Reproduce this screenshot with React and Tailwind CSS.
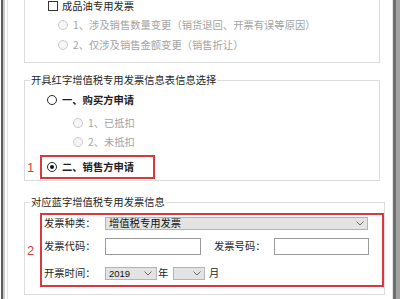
import React from 'react'

function Radio({ checked, disabled }) {
  return (
    <span className={`w-[10px] h-[10px] rounded-full border flex items-center justify-center shrink-0 ${disabled ? 'border-[#c9c9c9] bg-[#f6f6f6]' : 'border-[#2a2a2a] bg-white'}`}>
      {checked && <span className="w-[4px] h-[4px] rounded-full bg-[#111]" />}
    </span>
  )
}

function Chevron() {
  return (
    <svg width="8" height="5" viewBox="0 0 8 5" className="shrink-0">
      <polyline points="0.5,0.5 4,4 7.5,0.5" fill="none" stroke="#6a6a6a" strokeWidth="1" />
    </svg>
  )
}

export default function App() {
  return (
    <div className="w-[400px] h-[299px] bg-white flex overflow-hidden text-[10.3px] leading-none text-[#1e1e1e] font-['Noto_Sans_CJK_SC','Noto_Sans',sans-serif]">
      {/* window left frame */}
      <div className="w-[1px] bg-white" />
      <div className="w-[2px] bg-[#5c5c5c]" />
      <div className="w-[2px] bg-[#cacaca]" />
      <div className="w-[2px] bg-white" />
      <div className="w-[1px] bg-[#e4e4e4]" />

      <div className="w-[384px] pl-[16px] flex flex-col">
        {/* group 1 (top cut off) */}
        <div className="w-[356px] h-[63px] border-x border-b border-[#dcdcdc] flex flex-col">
          <div className="h-[12px] pl-[23px] flex items-center gap-[4px]">
            <span className="w-[10px] h-[10px] border border-[#333] bg-white shrink-0" />
            <span>成品油专用发票</span>
          </div>
          <div className="mt-[3px] h-[20px] pl-[33px] flex items-center gap-[5px] text-[#a3a3a3]">
            <Radio disabled />
            <span>1、涉及销售数量变更（销货退回、开票有误等原因）</span>
          </div>
          <div className="h-[20px] pl-[33px] flex items-center gap-[5px] text-[#a3a3a3]">
            <Radio disabled />
            <span>2、仅涉及销售金额变更（销售折让）</span>
          </div>
        </div>

        {/* group 2 */}
        <fieldset className="mt-[10px] w-[356px] border border-[#dcdcdc] pb-[1px]">
          <legend className="ml-[5px] px-[1px] leading-[14px]">开具红字增值税专用发票信息表信息选择</legend>
          <div className="mt-[5px] h-[16px] pl-[22px] flex items-center gap-[5px] font-bold">
            <Radio />
            <span>一、购买方申请</span>
          </div>
          <div className="mt-[7px] h-[16px] pl-[48px] flex items-center gap-[5px] text-[#a3a3a3]">
            <Radio disabled />
            <span>1、已抵扣</span>
          </div>
          <div className="mt-[3px] h-[16px] pl-[48px] flex items-center gap-[5px] text-[#a3a3a3]">
            <Radio disabled />
            <span>2、未抵扣</span>
          </div>
          <div className="mt-[5px] flex items-center">
            <span className="w-[15px] pl-[2px] text-[13px] text-[#d24545] font-['Liberation_Sans',sans-serif]">1</span>
            <div className="w-[115px] h-[24px] border-2 border-[#d8393f] pl-[5px] flex items-center gap-[5px] font-bold">
              <Radio checked />
              <span>二、销售方申请</span>
            </div>
          </div>
        </fieldset>

        {/* group 3 */}
        <fieldset className="mt-[14px] w-[355px] h-[100px] border border-[#dcdcdc]">
          <legend className="ml-[5px] px-[1px] leading-[14px]">对应蓝字增值税专用发票信息</legend>
          <div className="mt-[4px] flex items-center">
            <span className="w-[15px] pl-[2px] text-[13px] text-[#d24545] font-['Liberation_Sans',sans-serif]">2</span>
            <div className="w-[344px] h-[74px] shrink-0 border-2 border-[#d8393f] pl-[2px] flex flex-col">
              <div className="mt-[1px] h-[14px] flex items-center">
                <span className="w-[61px]">发票种类：</span>
                <div className="w-[263px] h-[13px] bg-[#e3e3e3] border border-[#b4b4b4] flex items-center justify-between pl-[3px] pr-[3px]">
                  <span className="text-[#111]">增值税专用发票</span>
                  <Chevron />
                </div>
              </div>
              <div className="mt-[8px] h-[17px] flex items-center">
                <span className="w-[61px]">发票代码：</span>
                <div className="w-[96px] h-[17px] bg-white border border-[#9a9a9a]" />
                <span className="ml-[13px] w-[60px]">发票号码：</span>
                <div className="w-[95px] h-[17px] bg-white border border-[#9a9a9a]" />
              </div>
              <div className="mt-[12px] h-[13px] flex items-center">
                <span className="w-[61px]">开票时间：</span>
                <div className="w-[52px] h-[13px] bg-[#e3e3e3] border border-[#b4b4b4] flex items-center justify-between pl-[3px] pr-[4px]">
                  <span className="text-[9.5px] font-['Liberation_Sans',sans-serif] text-[#111]">2019</span>
                  <Chevron />
                </div>
                <span className="ml-[1px] w-[15px]">年</span>
                <div className="w-[32px] h-[13px] bg-[#e3e3e3] border border-[#b4b4b4] flex items-center justify-end pr-[3px]">
                  <Chevron />
                </div>
                <span className="ml-[4px]">月</span>
              </div>
            </div>
          </div>
        </fieldset>
      </div>

      {/* window right frame */}
      <div className="w-[1px] bg-[#e6e6e6]" />
      <div className="w-[3px] bg-[#6e6e6e]" />
      <div className="w-[4px] bg-[#a2a2a2]" />
    </div>
  )
}
